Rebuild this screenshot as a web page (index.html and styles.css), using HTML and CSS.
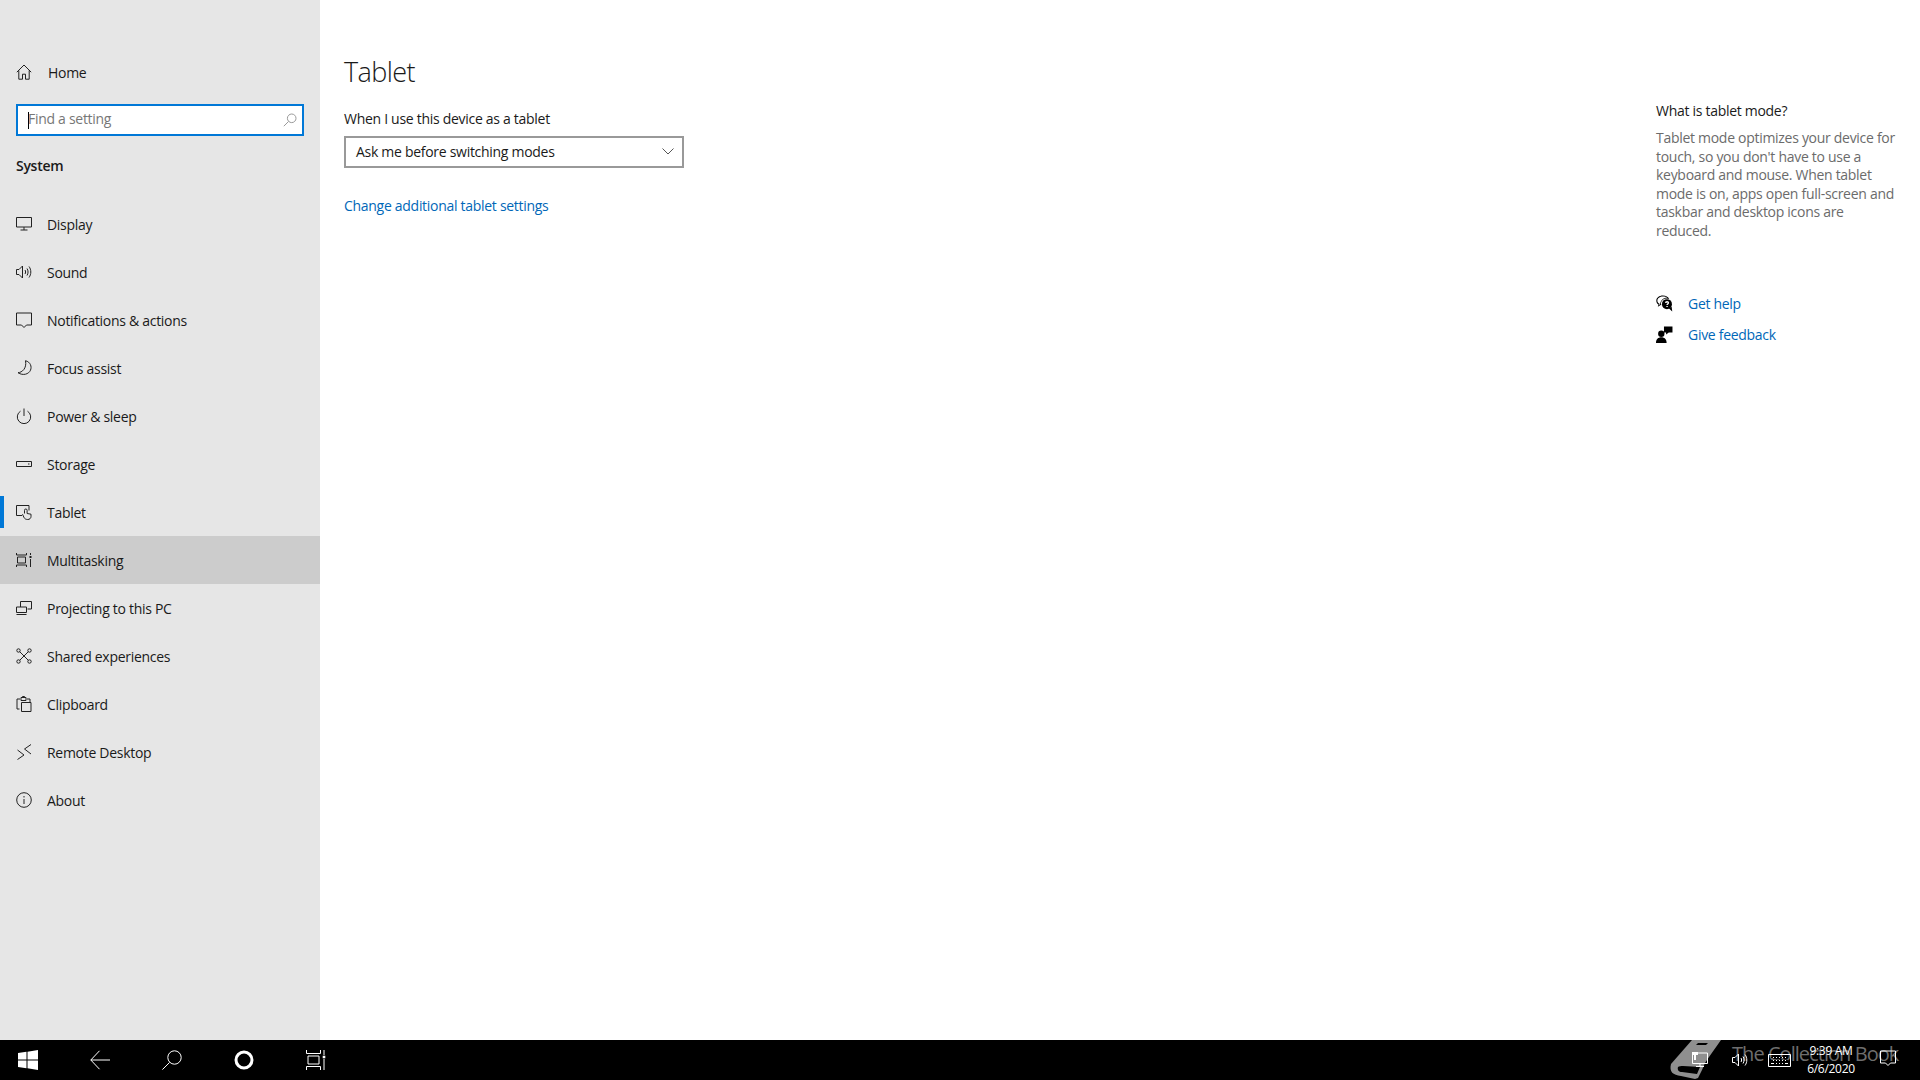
FILE: index.html
```html
<!DOCTYPE html>
<html lang="en">

<head>
    <meta charset="UTF-8">
    <title>Settings</title>
    <link rel="stylesheet" href="styles.css">
</head>

<body>
    <div class="window">
        <nav class="sidebar">
            <a class="home nav-row">
                <svg class="icon" viewBox="0 0 16 16"><path d="M.8 8.200 8 1l7.200 7.200M2.800 6.400v8.800h3.700v-5h3v5h3.700V6.400"/></svg>
                <span>Home</span>
            </a>
            <div class="search">
                <span class="caret"></span>
                <span class="placeholder">Find a setting</span>
                <svg class="search-icon" viewBox="0 0 14 14"><circle cx="8.700" cy="5.300" r="4.300"/><path d="M5.600 8.400.8 13.200"/></svg>
            </div>
            <div class="section">System</div>
            <ul class="nav-list">
                <li class="nav-row">
                    <svg class="icon" viewBox="0 0 16 16"><path d="M.5 1.500h15v9.500H.5zM8 11v3M4.500 14h7"/></svg>
                    <span>Display</span>
                </li>
                <li class="nav-row">
                    <svg class="icon" viewBox="0 0 16 16"><path d="M.5 5.500h2.500L6.500 2v12L3 10.500H.5zM9 6c.8 1.200.8 2.800 0 4M11 4.500c1.400 2 1.400 5 0 7M13 2.500c2.400 3.200 2.400 7.800 0 11"/></svg>
                    <span>Sound</span>
                </li>
                <li class="nav-row">
                    <svg class="icon" viewBox="0 0 16 16"><path d="M.5 1h15v12h-5L8 15.500 5.500 13H.5z"/></svg>
                    <span>Notifications &amp; actions</span>
                </li>
                <li class="nav-row">
                    <svg class="icon" viewBox="0 0 16 16"><path d="M9.500.7c5 1.300 6.500 6 5 9.500-1.700 4-7.500 5.800-12.500 2.500C6 12.500 11 8.500 9.500.7z"/></svg>
                    <span>Focus assist</span>
                </li>
                <li class="nav-row">
                    <svg class="icon" viewBox="0 0 16 16"><path d="M8 .5v7.500M4.500 3.200a6.700 6.700 0 1 0 7 0"/></svg>
                    <span>Power &amp; sleep</span>
                </li>
                <li class="nav-row">
                    <svg class="icon" viewBox="0 0 16 16"><path d="M.5 5.500h15v5H.5zM12 8h1.500"/></svg>
                    <span>Storage</span>
                </li>
                <li class="nav-row current">
                    <svg class="icon tablet" viewBox="0 0 16 16"><path d="M6 11.500H.5v-10h12.500v5M8.500 9.500V6.300a1.300 1.300 0 0 1 2.600 0v3.200l3.900.7v2.300c0 1.800-1.400 3-3.300 3-1.800 0-3.100-.7-3.800-2.200L6.500 10.200"/></svg>
                    <span>Tablet</span>
                </li>
                <li class="nav-row hover">
                    <svg class="icon" viewBox="0 0 16 16"><path d="M.5 1v2h10V1M.5 15v-2h10v2M1.500 5h8v6h-8zM14.500 1v2M14.500 7v8"/><path class="dot" d="M13.500 4h2v2h-2z"/></svg>
                    <span>Multitasking</span>
                </li>
                <li class="nav-row">
                    <svg class="icon" viewBox="0 0 16 16"><path d="M4.500 7V1.500h11v7.500h-4M.5 7h10v5.500H.5zM.5 14.500h10"/></svg>
                    <span>Projecting to this PC</span>
                </li>
                <li class="nav-row">
                    <svg class="icon" viewBox="0 0 16 16"><circle cx="2.500" cy="2.500" r="1.700"/><circle cx="13.500" cy="2.500" r="1.700"/><circle cx="2.500" cy="13.500" r="1.700"/><circle cx="13.500" cy="13.500" r="1.700"/><path d="m3.700 3.700 8.600 8.600M12.300 3.700l-8.600 8.600"/></svg>
                    <span>Shared experiences</span>
                </li>
                <li class="nav-row">
                    <svg class="icon" viewBox="0 0 16 16"><path d="M3.500 13H1V3h3M11 3h3v3M5 1.500h5V4.500H5zM6.500 1.500V.5h2v1M5.500 6.500h9.500v9H5.500z"/></svg>
                    <span>Clipboard</span>
                </li>
                <li class="nav-row">
                    <svg class="icon" viewBox="0 0 16 16"><path d="m1.500 6 6.500 5-6.500 4.500M15 .5 8.500 5l6.500 5"/></svg>
                    <span>Remote Desktop</span>
                </li>
                <li class="nav-row">
                    <svg class="icon" viewBox="0 0 16 16"><circle cx="8" cy="8" r="7.300"/><path d="M8 7v5M8 4v1.500"/></svg>
                    <span>About</span>
                </li>
            </ul>
        </nav>

        <main class="content">
            <h1>Tablet</h1>
            <label class="field-label">When I use this device as a tablet</label>
            <div class="select">
                <span>Ask me before switching modes</span>
                <svg class="chevron" viewBox="0 0 12 7"><path d="m.5.5 5.500 5.500L11.500.5"/></svg>
            </div>
            <a class="link more">Change additional tablet settings</a>
        </main>

        <aside class="help">
            <h2>What is tablet mode?</h2>
            <p>Tablet mode optimizes your device for touch, so you don't have to use a keyboard and mouse. When tablet mode is on, apps open full-screen and taskbar and desktop icons are reduced.</p>
            <div class="help-links">
                <a class="help-link">
                    <svg class="help-icon" viewBox="0 0 16 16"><path class="solid" d="M6.500.5C3 .5.3 2.600.3 5.300c0 1.500.8 2.800 2.100 3.700L1.700 11l2.800-1.500.5.100C4.700 9 4.600 8.300 4.700 7.500 5 5 7.200 3.300 10 3.300c.9 0 1.700.2 2.400.5C11.600 1.800 9.300.5 6.500.5z"/><path class="hole" d="M6.500 1.500C3.600 1.500 1.300 3.200 1.300 5.300c0 1.300.8 2.300 2 3l-.3 1 .9-.4C4 6 6 2.800 10.500 2.400 9.500 1.800 8 1.500 6.500 1.500z"/><circle class="solid" cx="10.300" cy="8.600" r="4.700"/><path class="solid" d="m12 12.500 3.300 3-.6-4.500z"/><path class="mark" d="M9 7.400c.1-1.400 2.700-1.400 2.700 0 0 1-1.300 1-1.300 2.100M10.400 10.300v1"/></svg>
                    <span class="link">Get help</span>
                </a>
                <a class="help-link">
                    <svg class="help-icon" viewBox="0 0 16 16"><circle class="solid" cx="5" cy="7.300" r="3"/><path class="solid" d="M0 16c0-3.500 2-5.500 5-5.500s5 2 5 5.500zM7.500.5H15.500V6H12L9.500 8V6H7.500z"/></svg>
                    <span class="link">Give feedback</span>
                </a>
            </div>
        </aside>
    </div>

    <footer class="taskbar">
        <div class="task-buttons">
            <span class="task-btn">
                <svg class="task-icon" viewBox="0 0 20 20"><path class="win" d="M0 3 8.500 1.800v7.700H0zM9.500 1.700 20 0v9.500H9.500zM0 10.500h8.500v7.700L0 17zM9.500 10.500H20V20L9.500 18.300z"/></svg>
            </span>
            <span class="task-btn">
                <svg class="task-icon" viewBox="0 0 20 20"><path d="M20 10H.8M9.500 .8.800 10l8.700 9.200"/></svg>
            </span>
            <span class="task-btn">
                <svg class="task-icon" viewBox="0 0 20 20"><circle cx="12.500" cy="7.500" r="6.700"/><path d="M7.600 12.400.4 19.600"/></svg>
            </span>
            <span class="task-btn">
                <svg class="task-icon" viewBox="0 0 20 20"><circle class="ring" cx="10" cy="10" r="8"/></svg>
            </span>
            <span class="task-btn">
                <svg class="task-icon" viewBox="0 0 20 20"><path d="M.5 0v3.500h14V0M2 6h11v8H2zM.5 20v-3.500h14V20M18 0v5M18 9v11"/><path class="dot" d="M16.700 5.700h2.600v2.600h-2.600z"/></svg>
            </span>
        </div>
        <div class="tray">
            <svg class="tray-icon net" viewBox="0 0 16 16"><path d="M.5 1h15v10.500H.5zM8 11.500v3M4 14.500h8"/><path class="dot" d="M0 0h6v3H0zM2 3h2v5H2z"/></svg>
            <svg class="tray-icon vol" viewBox="0 0 16 16"><path d="M.5 5.500h2.500L6.500 2v12L3 10.500H.5zM9 6c.8 1.200.8 2.800 0 4M11 4.500c1.400 2 1.400 5 0 7M13 2.500c2.400 3.200 2.400 7.800 0 11"/></svg>
            <svg class="tray-icon keys" viewBox="0 0 23 13"><path d="M.5.5h22v12H.5zM3 3.500h17M3 6.500h17M3 9.500h17" /><path class="dashes" d="M3 3.500h17M3 6.500h17M6 9.500h11"/></svg>
            <div class="clock">
                <span>9:39 AM</span>
                <span>6/6/2020</span>
            </div>
            <svg class="tray-icon note" viewBox="0 0 16 16"><path d="M.5 1h15v12h-5L8 15.500 5.500 13H.5z"/></svg>
        </div>
        <div class="watermark">
            <svg class="book" viewBox="0 0 52 40"><path d="M2 24 23 0h29L40 17l-4 6-3 7-4 8-3 1-14-3C4 35 0 32 2 24z"/><path class="book-cut" d="M9 27c-1 3 1 5 4 5l15 2 3-7-17-1c-2 0-4 0-5 1zM29 3h10l-2 2H27z"/></svg>
            <span class="watermark-text">The Collection Book</span>
        </div>
    </footer>
</body>

</html>
```

FILE: styles.css
```css
* {
    box-sizing: border-box;
}

html,
body {
    margin: 0;
    height: 100%;
}

body {
    display: flex;
    flex-direction: column;
    overflow: hidden;
    background: #fff;
    color: #1a1a1a;
    font-family: "Open Sans", "Noto Sans", sans-serif;
    font-size: 14px;
    letter-spacing: -0.29px;
}

svg {
    display: block;
    fill: none;
    stroke: currentColor;
}

.window {
    flex: 1;
    display: flex;
    min-height: 0;
}

/* left column */
.sidebar {
    width: 320px;
    flex: none;
    padding-top: 48px;
    background: #e6e6e6;
}

.nav-list {
    margin: 0;
    padding: 0;
    list-style: none;
}

.nav-row {
    position: relative;
    display: flex;
    align-items: center;
    height: 48px;
    padding-left: 16px;
    gap: 15px;
}

.home {
    gap: 16px;
}

.icon {
    width: 16px;
    height: 16px;
    flex: none;
    stroke: #222;
    stroke-width: 1;
}

.icon .dot,
.task-icon .dot,
.tray-icon .dot {
    fill: currentColor;
    stroke: none;
}

.current::before {
    content: "";
    position: absolute;
    left: 0;
    top: 8px;
    width: 4px;
    height: 32px;
    background: #0078d7;
}

.hover {
    background: #ccc;
}

.search {
    display: flex;
    align-items: center;
    height: 32px;
    margin: 8px 16px 0;
    padding: 0 5px 3px 10px;
    border: 2px solid #0078d7;
    background: #fff;
    color: #777;
}

.caret {
    width: 1px;
    height: 17px;
    margin-right: -1px;
    margin-top: 3px;
    background: #000;
}

.placeholder {
    flex: 1;
}

.search-icon {
    width: 14px;
    height: 14px;
    margin-top: 3px;
    stroke: #999;
}

.section {
    height: 64px;
    padding: 20px 16px 0;
    font-weight: 600;
}

/* middle column */
.content {
    flex: 1;
    padding: 53px 0 0 24px;
}

h1 {
    margin: 0;
    font-size: 27px;
    font-weight: 300;
    line-height: 38px;
    letter-spacing: -0.6px;
}

.field-label {
    display: block;
    margin-top: 18px;
    line-height: 20px;
}

.select {
    display: flex;
    align-items: center;
    justify-content: space-between;
    width: 340px;
    height: 32px;
    margin-top: 7px;
    padding: 0 8px 1px 10px;
    border: 2px solid #999;
}

.chevron {
    width: 12px;
    height: 7px;
    stroke: #555;
}

.link {
    color: #0067b8;
}

.more {
    display: block;
    margin-top: 28px;
    line-height: 20px;
}

/* right column */
.help {
    width: 264px;
    flex: none;
    padding-top: 101px;
}

h2 {
    margin: 0;
    font-size: 14px;
    font-weight: 400;
    line-height: 20px;
}

.help p {
    width: 242px;
    margin: 8px 0 0;
    color: #6b6b6b;
    line-height: 18.6px;
}

.help-links {
    margin-top: 47px;
}

.help-link {
    display: flex;
    align-items: center;
    height: 31px;
    gap: 15px;
}

.help-icon {
    width: 17px;
    height: 17px;
    flex: none;
    stroke: none;
}

.help-icon .solid {
    fill: #000;
}

.help-icon .hole {
    fill: #fff;
}

.help-icon .mark {
    stroke: #fff;
    stroke-width: 1.3;
}

/* taskbar */
.taskbar {
    position: relative;
    display: flex;
    justify-content: space-between;
    flex: none;
    height: 40px;
    background: #000;
    color: #fff;
}

.task-buttons {
    display: flex;
    gap: 16px;
}

.task-btn {
    display: flex;
    align-items: center;
    justify-content: center;
    width: 56px;
}

.task-icon {
    width: 20px;
    height: 20px;
    stroke: #fff;
}

.task-icon .win {
    fill: #fff;
    stroke: none;
}

.task-icon .ring {
    stroke-width: 3;
}

.tray {
    position: relative;
    z-index: 1;
    display: flex;
    align-items: center;
    padding-right: 24px;
}

.tray-icon {
    height: 16px;
    width: 16px;
    stroke: #fff;
}

.vol {
    margin-left: 24px;
}

.keys {
    width: 23px;
    height: 13px;
    margin-left: 20px;
}

.keys .dashes {
    stroke: #000;
    stroke-dasharray: 2 1;
}

.clock {
    display: flex;
    flex-direction: column;
    align-items: center;
    width: 80px;
    font-size: 12px;
    line-height: 18px;
    letter-spacing: -0.3px;
}

.note {
    margin: 0 0 4px 9px;
}

/* grey stamp lying under the tray */
.watermark {
    position: absolute;
    left: 1669px;
    top: 0;
    display: flex;
    align-items: center;
    gap: 11px;
    color: #6e6e6e;
    font-size: 20px;
    line-height: 28px;
    letter-spacing: -0.95px;
    white-space: nowrap;
}

.watermark-text {
    padding-bottom: 12px;
}

.book {
    width: 52px;
    height: 40px;
    fill: #8f8f8f;
    stroke: none;
}

.book .book-cut {
    fill: #000;
}
```
